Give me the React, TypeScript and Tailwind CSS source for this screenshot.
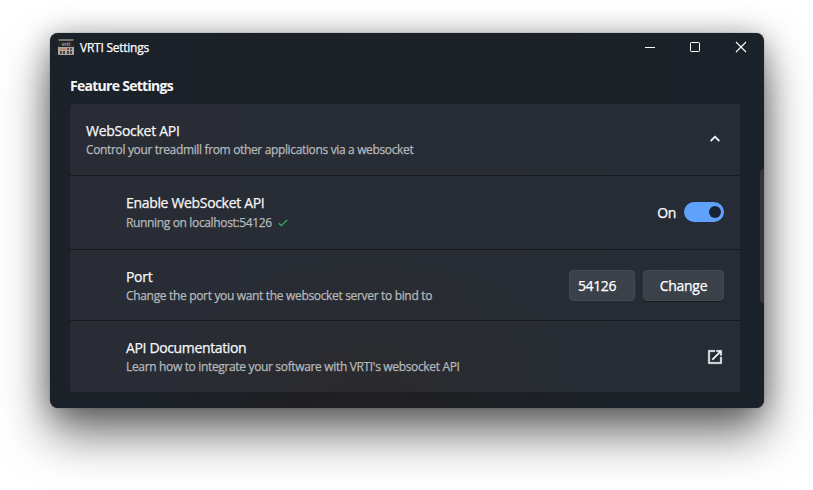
import type { ReactNode } from "react";

function AppIcon() {
  return (
    <svg width="16" height="16" viewBox="0 0 16 16" className="shrink-0 [-webkit-text-stroke-width:0px]">
      <rect width="16" height="16" rx="1" fill="#a9a6a3" />
      <rect width="16" height="8" rx="1" fill="#252424" />
      <rect x="0.5" width="15" height="2" rx="0.7" fill="#77736f" />
      <text x="3.4" y="6.6" fontSize="5" fontWeight="700" fill="#a5a2a0" fontFamily="Open Sans, sans-serif">vrti</text>
      <g fill="#e2783f">
        <rect x="2" y="9" width="2" height="2" />
        <rect x="5" y="9" width="2" height="2" />
      </g>
      <g fill="#5c5654">
        <rect x="9" y="9" width="2" height="2" />
        <rect x="12" y="9" width="2" height="2" />
      </g>
      <g fill="#4b4644">
        <rect x="2" y="12" width="2" height="3" />
        <rect x="5" y="12" width="2" height="3" />
        <rect x="9" y="12" width="2" height="3" />
        <rect x="12" y="12" width="2" height="3" />
      </g>
    </svg>
  );
}

type RowProps = {
  title: ReactNode;
  detail: ReactNode;
  className: string;
  children: ReactNode;
};

function Row({ title, detail, className, children }: RowProps) {
  return (
    <div className={`flex items-center justify-between pr-4 ${className}`}>
      <div className="whitespace-nowrap">
        <div className="text-[14px] leading-[19px] text-[#f6f7f8]">{title}</div>
        <div className="flex items-center text-[12px] leading-[18px] text-[#b5b8bb]">{detail}</div>
      </div>
      {children}
    </div>
  );
}

export default function App() {
  return (
    <div className="h-[490px] w-[813px] overflow-hidden bg-white pt-[33px] pl-[50px] font-['Open_Sans','Noto_Sans',sans-serif] [-webkit-text-stroke-width:0.25px]">
      <div className="flex h-[375px] w-[714px] flex-col overflow-hidden rounded-lg bg-[#1c2128] bg-[radial-gradient(ellipse_220px_150px_at_45%_105%,#211f21,transparent),linear-gradient(100deg,#1b222a,#1c2027_40%,#1b2229)] shadow-[0_0_1px_rgba(0,0,0,0.6),0_2px_28px_rgba(0,0,0,0.3),0_26px_48px_rgba(0,0,0,0.56)]">
        <header className="flex h-[28px] shrink-0 items-center justify-between pr-[17px] pl-2">
          <div className="flex items-center gap-[6px] text-[12px] text-white">
            <AppIcon />
            <span className="pt-px tracking-[-0.25px]">VRTI Settings</span>
          </div>
          <svg width="103" height="12" viewBox="0 0 103 12" fill="none" stroke="#fff" strokeWidth="1">
            <path d="M1 6.5h10" />
            <rect x="46.5" y="1.5" width="9" height="9" rx="0.8" />
            <path d="m92 1 10 10m0-10-10 10" strokeWidth="1.1" />
          </svg>
        </header>
        <div className="flex min-h-0 grow justify-between pl-5">
          <main className="w-[670px]">
            <h1 className="flex h-[43px] items-center pt-[5px] text-[14px] font-bold tracking-[-0.72px] text-[#f7f7f8] [-webkit-text-stroke-width:0px]">
              Feature Settings
            </h1>
            <section className="overflow-hidden rounded-[4px] bg-[radial-gradient(ellipse_200px_150px_at_45%_105%,#2b2a2d,transparent),linear-gradient(90deg,#292c34,#262c35)]">
              <Row
                className="h-[72px] border-b border-[#171a20] pl-4"
                title={<span className="tracking-[-0.28px]">WebSocket API</span>}
                detail={<div className="pt-px tracking-[-0.35px]">Control your treadmill from other applications via a websocket</div>}
              >
                <svg className="mb-px" width="18" height="18" viewBox="0 0 18 18" fill="none" stroke="#f4f5f6" strokeWidth="1.8">
                  <path d="m4.7 11 4.3-4.3 4.3 4.3" />
                </svg>
              </Row>
              <Row
                className="h-[74px] border-b border-[#171a20] pl-14"
                title={<div className="-mt-px mb-px tracking-[-0.33px]">Enable WebSocket API</div>}
                detail={
                  <div className="flex items-center pt-px">
                    <span className="tracking-[-0.35px]">Running on localhost:54126</span>
                    <svg className="ml-[6px]" width="10" height="8" viewBox="0 0 10 8" fill="none" stroke="#2fae60" strokeWidth="1.3">
                      <path d="m0.7 4.2 2.5 2.5L9.2 1" />
                    </svg>
                  </div>
                }
              >
                <div className="flex items-center gap-2 pb-px text-[14px] text-white">
                  <span className="pt-px tracking-[-0.4px]">On</span>
                  <div className="flex h-5 w-10 items-center justify-end rounded-full bg-[#60a1fb] pr-[3px]">
                    <div className="size-3 rounded-full bg-[#182435]" />
                  </div>
                </div>
              </Row>
              <Row
                className="h-[71px] border-b border-[#171a20] pl-14"
                title={<div className="mt-px tracking-[-0.3px]">Port</div>}
                detail={<div className="pt-px tracking-[-0.33px]">Change the port you want the websocket server to bind to</div>}
              >
                <div className="flex gap-2 text-[14px] text-white">
                  <div className="flex h-[31px] w-[66px] items-center rounded-[4px] border border-[#444a52] bg-[#3b4149] pl-2">
                    <span className="tracking-[-0.4px]">54126</span>
                  </div>
                  <div className="flex h-[31px] w-[81px] items-center justify-center rounded-[4px] border border-[#444a52] bg-[#3b4149] shadow-[0_1px_0_#1a1d22]">
                    <span className="tracking-[-0.3px]">Change</span>
                  </div>
                </div>
              </Row>
              <Row
                className="h-[72px] border-b border-[#1a1d23] pl-14"
                title={<span className="tracking-[-0.36px]">API Documentation</span>}
                detail={<div className="pt-px tracking-[-0.34px]">Learn how to integrate your software with VRTI's websocket API</div>}
              >
                <svg width="18" height="18" viewBox="0 0 24 24" fill="#f6f7f7" stroke="#f6f7f7" strokeWidth="0.4">
                  <path d="M19 19H5V5h7V3H3v18h18v-9h-2zM14 3v2h3.6l-9.8 9.8 1.4 1.4L19 6.4V10h2V3z" />
                </svg>
              </Row>
            </section>
          </main>
          <div className="mt-[108px] h-[134px] w-1 rounded-l-sm bg-[#30353e]" />
        </div>
      </div>
    </div>
  );
}
